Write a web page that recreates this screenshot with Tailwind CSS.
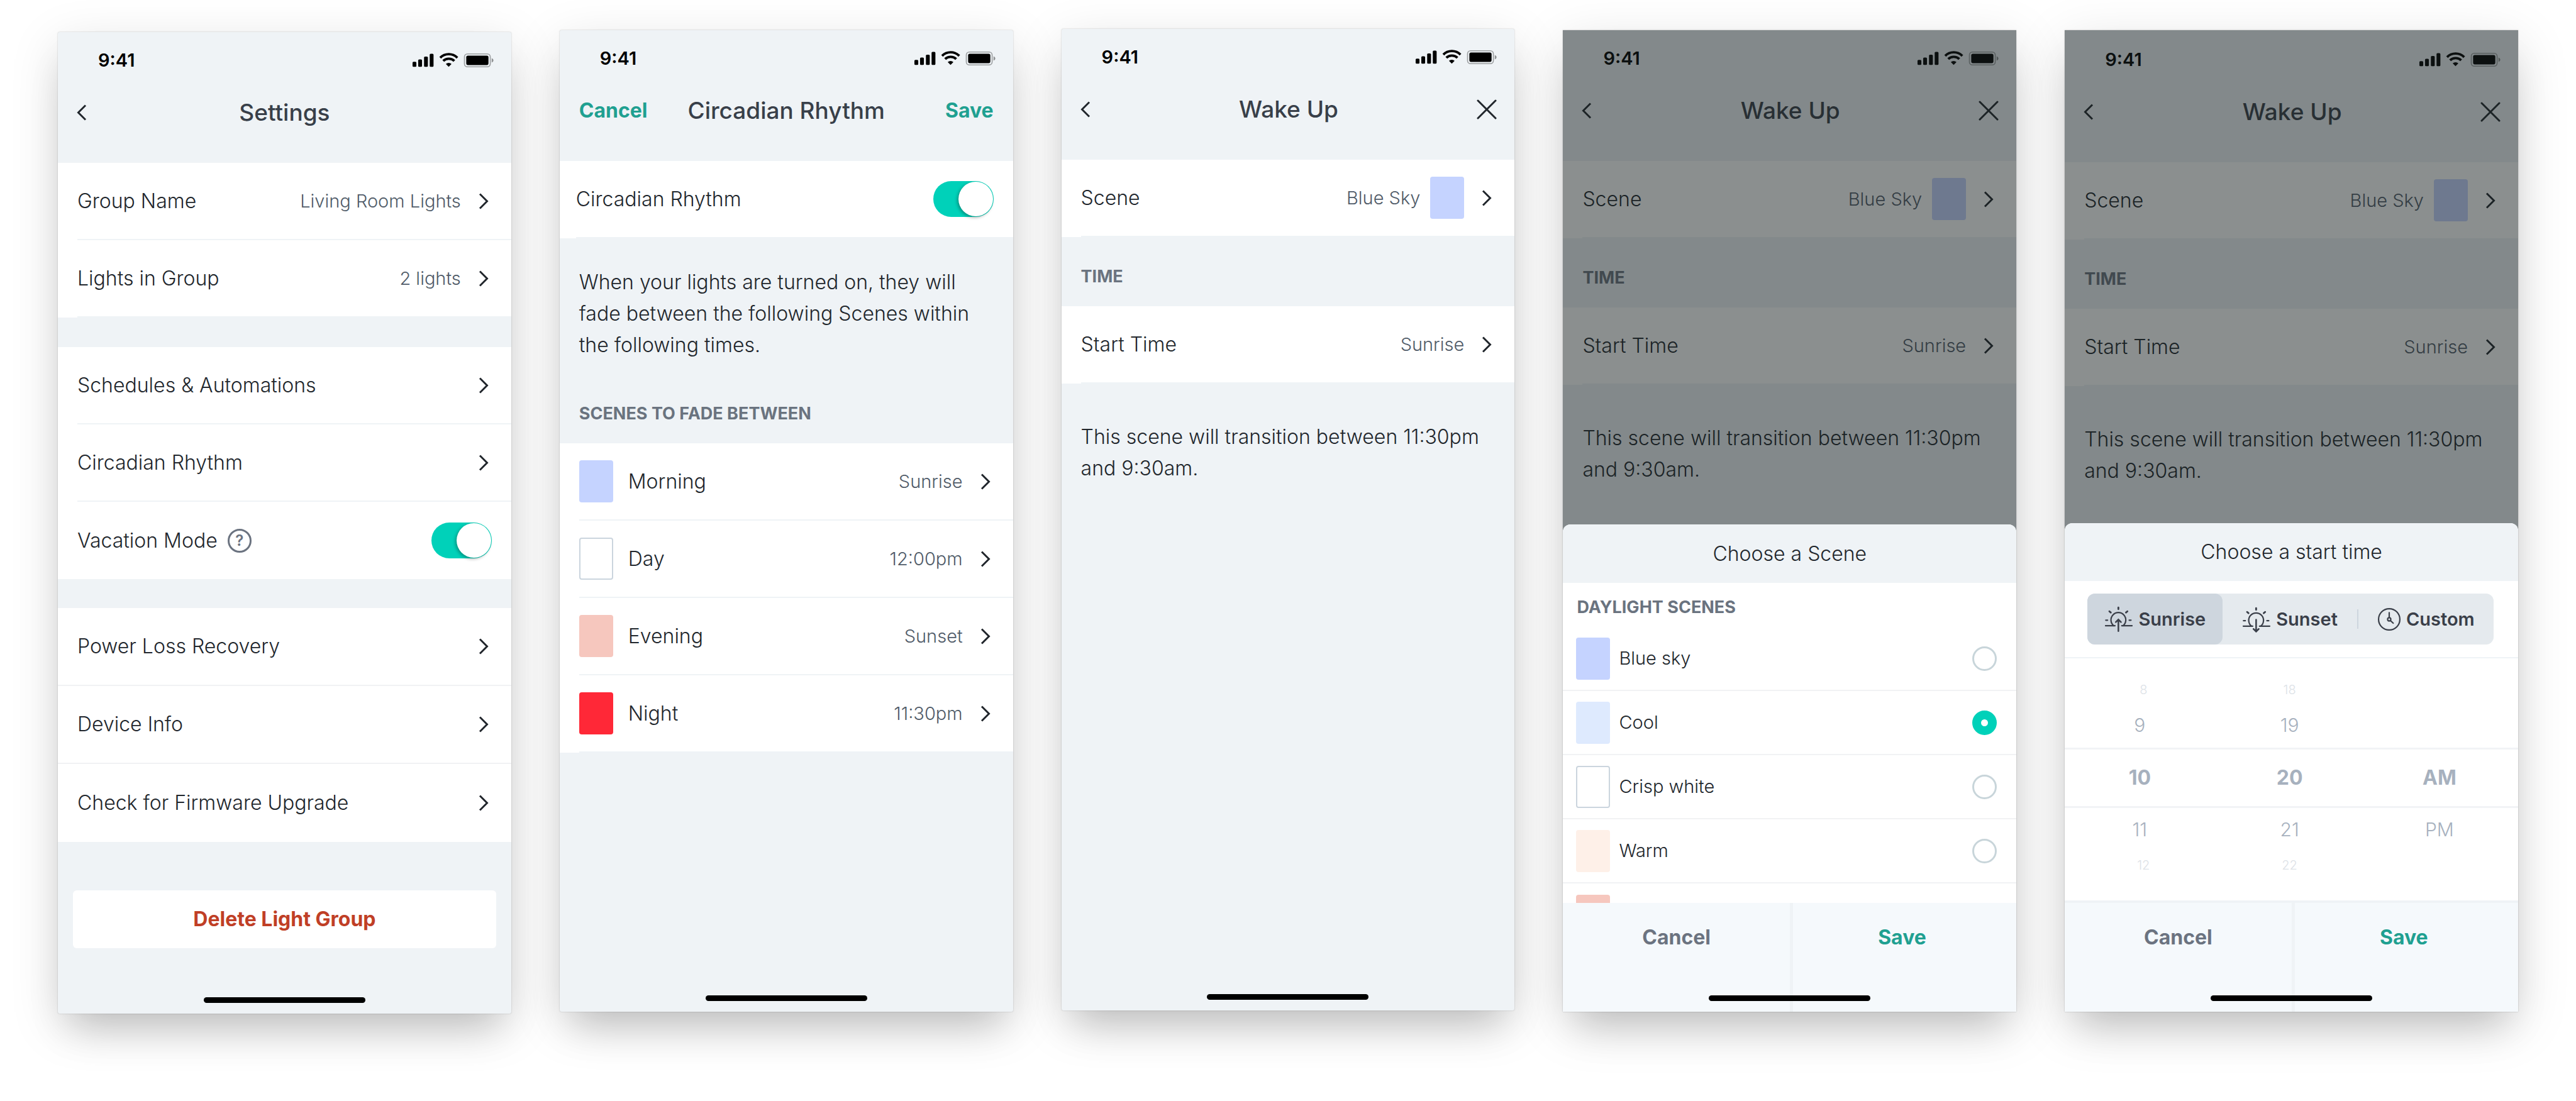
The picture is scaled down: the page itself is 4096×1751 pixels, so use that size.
<!DOCTYPE html>
<html lang="en">
<head>
<meta charset="utf-8">
<meta name="viewport" content="width=device-width, initial-scale=1">
<title>Light group settings</title>
<script src="https://cdn.jsdelivr.net/npm/@tailwindcss/browser@4"></script>
</head>
<body class="min-h-screen bg-white font-['Inter',sans-serif] text-[32px] font-light text-[#21262c]">

<svg class="hidden" aria-hidden="true">
  <symbol id="status" viewBox="66 80 408 80">
    <rect x="69" y="127" width="19" height="25" rx="5"/>
    <rect x="97" y="115" width="19" height="37" rx="5"/>
    <rect x="126" y="101" width="19" height="51" rx="5"/>
    <rect x="154" y="87" width="19" height="65" rx="5"/>
    <g fill="none" stroke="currentColor" stroke-width="12">
      <path d="M206 107a60 60 0 0 1 85 0"/>
      <path d="M221 123a39 39 0 0 1 55 0"/>
    </g>
    <path d="M248 152l-14-14a20 20 0 0 1 28 0z"/>
    <rect x="326" y="88" width="128" height="64" rx="15" fill="none" stroke="currentColor" stroke-opacity=".35" stroke-width="5"/>
    <rect x="335" y="97" width="110" height="46" rx="8"/>
    <path d="M461 109q9 4 9 11t-9 11z" fill-opacity=".4"/>
  </symbol>
  <symbol id="next" viewBox="0 0 16 26">
    <path d="M2 1.5L13.5 13L2 24.5" fill="none" stroke="currentColor" stroke-width="3"/>
  </symbol>
  <symbol id="back" viewBox="0 0 16 26">
    <path d="M14 1.5L2.500 13L14 24.5" fill="none" stroke="currentColor" stroke-width="3"/>
  </symbol>
  <symbol id="close" viewBox="0 0 32 32">
    <path d="M2 2L30 30M30 2L2 30" fill="none" stroke="currentColor" stroke-width="3" stroke-linecap="round"/>
  </symbol>
  <symbol id="sunrise" viewBox="132 100 144 132">
    <g fill="none" stroke="currentColor" stroke-linecap="round" stroke-width="7">
      <path stroke-width="9" d="M202 107v8M157 126l7 6M247 126l-7 6"/>
      <path d="M139 170h9M256 170h9M138 198h47M219 198h51"/>
      <path d="M179 198A37 37 0 1 1 225 198"/>
      <path stroke-width="8" d="M202 225V168M189 180l13-13 13 13"/>
    </g>
  </symbol>
  <symbol id="sunset" viewBox="132 100 144 132">
    <g fill="none" stroke="currentColor" stroke-linecap="round" stroke-width="7">
      <path stroke-width="9" d="M202 110v8M157 129l7 6M247 129l-7 6"/>
      <path d="M139 173h9M256 173h9M138 200h47M219 200h51"/>
      <path d="M179 200A37 37 0 1 1 225 200"/>
      <path stroke-width="8" d="M202 168V227M189 214l13 13 13-13"/>
    </g>
  </symbol>
  <symbol id="clock" viewBox="510 108 120 120">
    <g fill="none" stroke="currentColor" stroke-linecap="round" stroke-width="7">
      <circle cx="570" cy="168" r="53.5"/>
      <circle cx="570" cy="168" r="8"/>
      <path d="M570 134v24M577 175l13 12"/>
    </g>
  </symbol>
</svg>

<main class="grid grid-cols-5 items-start gap-[77px] px-[92px] pt-[46px]">

  <!-- Settings -->
  <section class="relative mt-[5px] flex h-[1561px] flex-col rounded-[3px] bg-[#eff3f6] shadow-[0_0_2px_rgba(0,0,0,0.25),0_20px_80px_rgba(0,0,0,0.13),0_40px_60px_-20px_rgba(0,0,0,0.18)]">
    <header class="h-[208px] shrink-0">
      <div class="flex h-[90px] items-center justify-between pl-[64px] pr-[27px] text-black">
        <span class="text-[29px] font-semibold">9:41</span>
        <svg class="h-[26px] w-[131px] fill-current" role="img" aria-label="Signal, Wi-Fi, battery"><use href="#status"/></svg>
      </div>
      <div class="grid h-[76px] grid-cols-[1fr_auto_1fr] items-center px-[30px]">
        <button class="justify-self-start" aria-label="Back"><svg class="h-[26px] w-[16px]"><use href="#back"/></svg></button>
        <h1 class="text-[37px] font-medium text-[#383f49]">Settings</h1>
      </div>
    </header>
    <div class="bg-white">
      <a href="#" class="flex h-[123px] items-center pl-[31px]"><span class="flex h-full flex-1 items-center gap-[28px] border-b-2 border-[#eff3f6] pr-[36px]"><span class="flex-1">Group Name</span><span class="text-[29px] text-[#505b68]">Living Room Lights</span><svg class="h-[26px] w-[16px]"><use href="#next"/></svg></span></a>
      <a href="#" class="flex h-[123px] items-center pl-[31px]"><span class="flex h-full flex-1 items-center gap-[28px] border-b-2 border-[#eff3f6] pr-[36px]"><span class="flex-1">Lights in Group</span><span class="text-[29px] text-[#505b68]">2 lights</span><svg class="h-[26px] w-[16px]"><use href="#next"/></svg></span></a>
    </div>
    <div class="mt-[47px] bg-white">
      <a href="#" class="flex h-[123px] items-center pl-[31px]"><span class="flex h-full flex-1 items-center border-b-2 border-[#eff3f6] pr-[36px]"><span class="flex-1">Schedules &amp; Automations</span><svg class="h-[26px] w-[16px]"><use href="#next"/></svg></span></a>
      <a href="#" class="flex h-[123px] items-center pl-[31px]"><span class="flex h-full flex-1 items-center border-b-2 border-[#eff3f6] pr-[36px]"><span class="flex-1">Circadian Rhythm</span><svg class="h-[26px] w-[16px]"><use href="#next"/></svg></span></a>
      <div class="flex h-[123px] items-center pl-[31px] pr-[31px]">
        <label for="vacation">Vacation Mode</label>
        <button class="ml-4 flex size-[38px] items-center justify-center rounded-full border-3 border-[#6b7380] text-[24px] font-semibold text-[#6b7380]" aria-label="About vacation mode">?</button>
        <input id="vacation" type="checkbox" role="switch" checked class="ml-auto flex h-[57px] w-[96px] appearance-none items-center justify-end rounded-full bg-[#00d1b9] pr-px before:size-[55px] before:rounded-full before:bg-white before:shadow-[-2px_2px_5px_rgba(0,0,0,0.3)]">
      </div>
    </div>
    <div class="mt-[46px] bg-white">
      <a href="#" class="flex h-[124px] items-center border-b-2 border-[#f1f2f4] pl-[31px] pr-[36px]"><span class="flex-1">Power Loss Recovery</span><svg class="h-[26px] w-[16px]"><use href="#next"/></svg></a>
      <a href="#" class="flex h-[124px] items-center border-b-2 border-[#f1f2f4] pl-[31px] pr-[36px]"><span class="flex-1">Device Info</span><svg class="h-[26px] w-[16px]"><use href="#next"/></svg></a>
      <a href="#" class="flex h-[124px] items-center pl-[31px] pr-[36px]"><span class="flex-1">Check for Firmware Upgrade</span><svg class="h-[26px] w-[16px]"><use href="#next"/></svg></a>
    </div>
    <button class="mx-[24px] mt-[77px] h-[92px] rounded-[6px] bg-white font-bold text-[#c03f26]">Delete Light Group</button>
    <div class="mx-auto mb-[17px] mt-auto h-[9px] w-[257px] rounded-full bg-black"></div>
  </section>

  <!-- Circadian rhythm -->
  <section class="relative mt-[2px] flex h-[1561px] flex-col rounded-[3px] bg-[#eff3f6] shadow-[0_0_2px_rgba(0,0,0,0.25),0_20px_80px_rgba(0,0,0,0.13),0_40px_60px_-20px_rgba(0,0,0,0.18)]">
    <header class="h-[208px] shrink-0">
      <div class="flex h-[90px] items-center justify-between pl-[64px] pr-[27px] text-black">
        <span class="text-[29px] font-semibold">9:41</span>
        <svg class="h-[26px] w-[131px] fill-current" role="img" aria-label="Signal, Wi-Fi, battery"><use href="#status"/></svg>
      </div>
      <div class="grid h-[76px] grid-cols-[1fr_auto_1fr] items-center px-[31px]">
        <button class="justify-self-start font-bold text-[#1fa091]">Cancel</button>
        <h1 class="text-[37px] font-medium text-[#383f49]">Circadian Rhythm</h1>
        <button class="justify-self-end font-bold text-[#1fa091]">Save</button>
      </div>
    </header>
    <div class="bg-white pl-[26px]">
      <div class="flex h-[123px] items-center justify-between border-b-2 border-[#eff3f6] pr-[31px]">
        <label for="circadian">Circadian Rhythm</label>
        <input id="circadian" type="checkbox" role="switch" checked class="flex h-[57px] w-[96px] appearance-none items-center justify-end rounded-full bg-[#00d1b9] pr-px before:size-[55px] before:rounded-full before:bg-white before:shadow-[-2px_2px_5px_rgba(0,0,0,0.3)]">
      </div>
    </div>
    <p class="px-[31px] pt-[45px] leading-[50px]">When your lights are turned on, they will fade between the following Scenes within the following times.</p>
    <h2 class="px-[31px] pb-[32px] pt-[69px] text-[27px] font-bold leading-[30px] text-[#6a737f]">SCENES TO FADE BETWEEN</h2>
    <div class="bg-white">
      <a href="#" class="flex h-[123px] items-center pl-[31px]"><span class="flex h-full flex-1 items-center border-b-2 border-[#eff3f6] pr-[36px]"><span class="h-[67px] w-[54px] rounded bg-[#c5d3ff]"></span><span class="flex-1 pl-6">Morning</span><span class="pr-[28px] text-[29px] text-[#505b68]">Sunrise</span><svg class="h-[26px] w-[16px]"><use href="#next"/></svg></span></a>
      <a href="#" class="flex h-[123px] items-center pl-[31px]"><span class="flex h-full flex-1 items-center border-b-2 border-[#eff3f6] pr-[36px]"><span class="h-[67px] w-[54px] rounded border-2 border-[#cbd5de] bg-white"></span><span class="flex-1 pl-6">Day</span><span class="pr-[28px] text-[29px] text-[#505b68]">12:00pm</span><svg class="h-[26px] w-[16px]"><use href="#next"/></svg></span></a>
      <a href="#" class="flex h-[123px] items-center pl-[31px]"><span class="flex h-full flex-1 items-center border-b-2 border-[#eff3f6] pr-[36px]"><span class="h-[67px] w-[54px] rounded bg-[#f6c7be]"></span><span class="flex-1 pl-6">Evening</span><span class="pr-[28px] text-[29px] text-[#505b68]">Sunset</span><svg class="h-[26px] w-[16px]"><use href="#next"/></svg></span></a>
      <a href="#" class="flex h-[123px] items-center pl-[31px]"><span class="flex h-full flex-1 items-center border-b-2 border-[#eff3f6] pr-[36px]"><span class="h-[67px] w-[54px] rounded bg-[#ff2837]"></span><span class="flex-1 pl-6">Night</span><span class="pr-[28px] text-[29px] text-[#505b68]">11:30pm</span><svg class="h-[26px] w-[16px]"><use href="#next"/></svg></span></a>
    </div>
    <div class="mx-auto mb-[17px] mt-auto h-[9px] w-[257px] rounded-full bg-black"></div>
  </section>

  <!-- Wake up -->
  <section class="relative flex h-[1561px] flex-col rounded-[3px] bg-[#eff3f6] shadow-[0_0_2px_rgba(0,0,0,0.25),0_20px_80px_rgba(0,0,0,0.13),0_40px_60px_-20px_rgba(0,0,0,0.18)]">
    <header class="h-[208px] shrink-0">
      <div class="flex h-[90px] items-center justify-between pl-[64px] pr-[27px] text-black">
        <span class="text-[29px] font-semibold">9:41</span>
        <svg class="h-[26px] w-[131px] fill-current" role="img" aria-label="Signal, Wi-Fi, battery"><use href="#status"/></svg>
      </div>
      <div class="grid h-[76px] grid-cols-[1fr_auto_1fr] items-center pl-[30px] pr-[28px]">
        <button class="justify-self-start" aria-label="Back"><svg class="h-[26px] w-[16px]"><use href="#back"/></svg></button>
        <h1 class="text-[37px] font-medium text-[#383f49]">Wake Up</h1>
        <button class="justify-self-end" aria-label="Close"><svg class="size-[32px]"><use href="#close"/></svg></button>
      </div>
    </header>
    <a href="#" class="flex h-[123px] bg-white pl-[31px]"><span class="flex flex-1 items-center border-b-2 border-[#eff3f6] pr-[36px]"><span class="flex-1">Scene</span><span class="pr-4 text-[29px] text-[#505b68]">Blue Sky</span><span class="mr-[28px] h-[67px] w-[54px] rounded bg-[#c5d3ff]"></span><svg class="h-[26px] w-[16px]"><use href="#next"/></svg></span></a>
    <h2 class="px-[31px] pb-[32px] pt-[48px] text-[27px] font-bold leading-[30px] text-[#6a737f]">TIME</h2>
    <a href="#" class="flex h-[123px] bg-white pl-[31px]"><span class="flex flex-1 items-center border-b-2 border-[#eff3f6] pr-[36px]"><span class="flex-1">Start Time</span><span class="pr-[28px] text-[29px] text-[#505b68]">Sunrise</span><svg class="h-[26px] w-[16px]"><use href="#next"/></svg></span></a>
    <p class="px-[31px] pt-[60px] leading-[50px]">This scene will transition between 11:30pm and 9:30am.</p>
    <div class="mx-auto mb-[17px] mt-auto h-[9px] w-[257px] rounded-full bg-black"></div>
  </section>

  <!-- Wake up: choose a scene -->
  <section class="relative mt-[2px] h-[1561px] bg-[#eff3f6] shadow-[0_0_2px_rgba(0,0,0,0.25),0_20px_80px_rgba(0,0,0,0.13),0_40px_60px_-20px_rgba(0,0,0,0.18)]">
    <header class="h-[208px]">
      <div class="flex h-[90px] items-center justify-between pl-[64px] pr-[27px] text-black">
        <span class="text-[29px] font-semibold">9:41</span>
        <svg class="h-[26px] w-[131px] fill-current" role="img" aria-label="Signal, Wi-Fi, battery"><use href="#status"/></svg>
      </div>
      <div class="grid h-[76px] grid-cols-[1fr_auto_1fr] items-center pl-[30px] pr-[28px]">
        <button class="justify-self-start" aria-label="Back"><svg class="h-[26px] w-[16px]"><use href="#back"/></svg></button>
        <h1 class="text-[37px] font-medium text-[#383f49]">Wake Up</h1>
        <button class="justify-self-end" aria-label="Close"><svg class="size-[32px]"><use href="#close"/></svg></button>
      </div>
    </header>
    <a href="#" class="flex h-[123px] bg-white pl-[31px]"><span class="flex flex-1 items-center border-b-2 border-[#eff3f6] pr-[36px]"><span class="flex-1">Scene</span><span class="pr-4 text-[29px] text-[#505b68]">Blue Sky</span><span class="mr-[28px] h-[67px] w-[54px] rounded bg-[#c5d3ff]"></span><svg class="h-[26px] w-[16px]"><use href="#next"/></svg></span></a>
    <h2 class="px-[31px] pb-[32px] pt-[48px] text-[27px] font-bold leading-[30px] text-[#6a737f]">TIME</h2>
    <a href="#" class="flex h-[123px] bg-white pl-[31px]"><span class="flex flex-1 items-center border-b-2 border-[#eff3f6] pr-[36px]"><span class="flex-1">Start Time</span><span class="pr-[28px] text-[29px] text-[#505b68]">Sunrise</span><svg class="h-[26px] w-[16px]"><use href="#next"/></svg></span></a>
    <p class="px-[31px] pt-[60px] leading-[50px]">This scene will transition between 11:30pm and 9:30am.</p>

    <div class="absolute inset-0 flex flex-col justify-end bg-[#171f20]/50">
      <div class="overflow-hidden rounded-t-[12px] bg-white" role="dialog" aria-label="Choose a Scene">
        <h2 class="flex h-[93px] items-center justify-center bg-[#eff3f6]">Choose a Scene</h2>
        <fieldset class="h-[509px] overflow-hidden">
          <legend class="px-[22px] pb-[16px] pt-[24px] text-[27px] font-bold leading-[30px] text-[#6a737f]">DAYLIGHT SCENES</legend>
          <label class="flex h-[102px] items-center border-b-2 border-[#f1f2f4] pl-[21px] pr-[31px] text-[29px]"><span class="mr-[14px] h-[67px] w-[54px] rounded bg-[#c5d3ff]"></span>Blue sky<input type="radio" name="scene" class="ml-auto size-[39px] appearance-none rounded-full border-3 border-[#c8d5da] checked:border-[14px] checked:border-[#00d1b9]"></label>
          <label class="flex h-[102px] items-center border-b-2 border-[#f1f2f4] pl-[21px] pr-[31px] text-[29px]"><span class="mr-[14px] h-[67px] w-[54px] rounded bg-[#deeafe]"></span>Cool<input type="radio" name="scene" checked class="ml-auto size-[39px] appearance-none rounded-full border-3 border-[#c8d5da] checked:border-[14px] checked:border-[#00d1b9]"></label>
          <label class="flex h-[102px] items-center border-b-2 border-[#f1f2f4] pl-[21px] pr-[31px] text-[29px]"><span class="mr-[14px] h-[67px] w-[54px] rounded border-2 border-[#cbd5de] bg-white"></span>Crisp white<input type="radio" name="scene" class="ml-auto size-[39px] appearance-none rounded-full border-3 border-[#c8d5da] checked:border-[14px] checked:border-[#00d1b9]"></label>
          <label class="flex h-[102px] items-center border-b-2 border-[#f1f2f4] pl-[21px] pr-[31px] text-[29px]"><span class="mr-[14px] h-[67px] w-[54px] rounded bg-[#fef0e8]"></span>Warm<input type="radio" name="scene" class="ml-auto size-[39px] appearance-none rounded-full border-3 border-[#c8d5da] checked:border-[14px] checked:border-[#00d1b9]"></label>
          <div class="flex h-[102px] items-center pl-[21px]"><span class="h-[67px] w-[54px] rounded bg-[#f6c7be]"></span></div>
        </fieldset>
        <div class="relative grid h-[173px] grid-cols-2 bg-[#f5f9fc]">
          <button class="pb-[64px] font-bold text-[#6b7380]">Cancel</button>
          <button class="border-l-5 border-[#eff3f6] pb-[64px] pr-2 font-bold text-[#1fa091]">Save</button>
          <div class="absolute inset-x-0 bottom-[17px] mx-auto h-[9px] w-[257px] rounded-full bg-black"></div>
        </div>
      </div>
    </div>
  </section>

  <!-- Wake up: choose a start time -->
  <section class="relative mt-[2px] h-[1561px] bg-[#eff3f6] pt-[2px] shadow-[0_0_2px_rgba(0,0,0,0.25),0_20px_80px_rgba(0,0,0,0.13),0_40px_60px_-20px_rgba(0,0,0,0.18)]">
    <header class="h-[208px]">
      <div class="flex h-[90px] items-center justify-between pl-[64px] pr-[27px] text-black">
        <span class="text-[29px] font-semibold">9:41</span>
        <svg class="h-[26px] w-[131px] fill-current" role="img" aria-label="Signal, Wi-Fi, battery"><use href="#status"/></svg>
      </div>
      <div class="grid h-[76px] grid-cols-[1fr_auto_1fr] items-center pl-[30px] pr-[28px]">
        <button class="justify-self-start" aria-label="Back"><svg class="h-[26px] w-[16px]"><use href="#back"/></svg></button>
        <h1 class="text-[37px] font-medium text-[#383f49]">Wake Up</h1>
        <button class="justify-self-end" aria-label="Close"><svg class="size-[32px]"><use href="#close"/></svg></button>
      </div>
    </header>
    <a href="#" class="flex h-[123px] bg-white pl-[31px]"><span class="flex flex-1 items-center border-b-2 border-[#eff3f6] pr-[36px]"><span class="flex-1">Scene</span><span class="pr-4 text-[29px] text-[#505b68]">Blue Sky</span><span class="mr-[28px] h-[67px] w-[54px] rounded bg-[#c5d3ff]"></span><svg class="h-[26px] w-[16px]"><use href="#next"/></svg></span></a>
    <h2 class="px-[31px] pb-[32px] pt-[48px] text-[27px] font-bold leading-[30px] text-[#6a737f]">TIME</h2>
    <a href="#" class="flex h-[123px] bg-white pl-[31px]"><span class="flex flex-1 items-center border-b-2 border-[#eff3f6] pr-[36px]"><span class="flex-1">Start Time</span><span class="pr-[28px] text-[29px] text-[#505b68]">Sunrise</span><svg class="h-[26px] w-[16px]"><use href="#next"/></svg></span></a>
    <p class="px-[31px] pt-[60px] leading-[50px]">This scene will transition between 11:30pm and 9:30am.</p>

    <div class="absolute inset-0 flex flex-col justify-end bg-[#171f20]/50">
      <div class="overflow-hidden rounded-t-[12px] bg-white" role="dialog" aria-label="Choose a start time">
        <h2 class="flex h-[92px] items-center justify-center bg-[#eff3f6]">Choose a start time</h2>
        <div class="border-b-2 border-[#eff3f6] py-5 pl-[36px] pr-[39px]">
          <div class="grid h-[81px] grid-cols-3 items-center rounded-[12px] bg-[#e5eaee] text-[29px] font-semibold text-[#3a3f49]">
            <button class="flex h-full items-center justify-center gap-2 rounded-[12px] bg-[#ced6de]" aria-pressed="true"><svg class="h-[42px] w-[46px]"><use href="#sunrise"/></svg>Sunrise</button>
            <button class="flex h-[31px] items-center justify-center gap-2 border-r-2 border-[#ced6de]" aria-pressed="false"><svg class="h-[42px] w-[46px]"><use href="#sunset"/></svg>Sunset</button>
            <button class="flex h-full items-center justify-center gap-2" aria-pressed="false"><svg class="size-[38px]"><use href="#clock"/></svg>Custom</button>
          </div>
        </div>
        <div class="h-[385px] pt-[30px] text-center text-[30px] text-[#a7b1be]">
          <div class="grid h-[40px] grid-cols-3 items-center pr-[6px] text-[20px] text-[#dde2e7]"><span class="pl-3">8</span><span>18</span></div>
          <div class="grid h-[72px] grid-cols-3 items-center pr-[6px]"><span>9</span><span>19</span></div>
          <div class="grid h-[96px] grid-cols-3 items-center border-y-3 border-[#f1f3f6] pr-[6px] text-[32px] font-bold"><span>10</span><span>20</span><span>AM</span></div>
          <div class="grid h-[68px] grid-cols-3 items-center pr-[6px]"><span>11</span><span>21</span><span>PM</span></div>
          <div class="grid h-[46px] grid-cols-3 items-center pr-[6px] text-[20px] text-[#dde2e7]"><span class="pl-3">12</span><span>22</span></div>
        </div>
        <div class="relative grid h-[177px] grid-cols-2 border-t-4 border-[#eff3f6] bg-[#f5f9fc]">
          <button class="pb-[64px] font-bold text-[#6b7380]">Cancel</button>
          <button class="border-l-5 border-[#eff3f6] pb-[64px] pr-2 font-bold text-[#1fa091]">Save</button>
          <div class="absolute inset-x-0 bottom-[17px] mx-auto h-[9px] w-[257px] rounded-full bg-black"></div>
        </div>
      </div>
    </div>
  </section>

</main>
</body>
</html>
